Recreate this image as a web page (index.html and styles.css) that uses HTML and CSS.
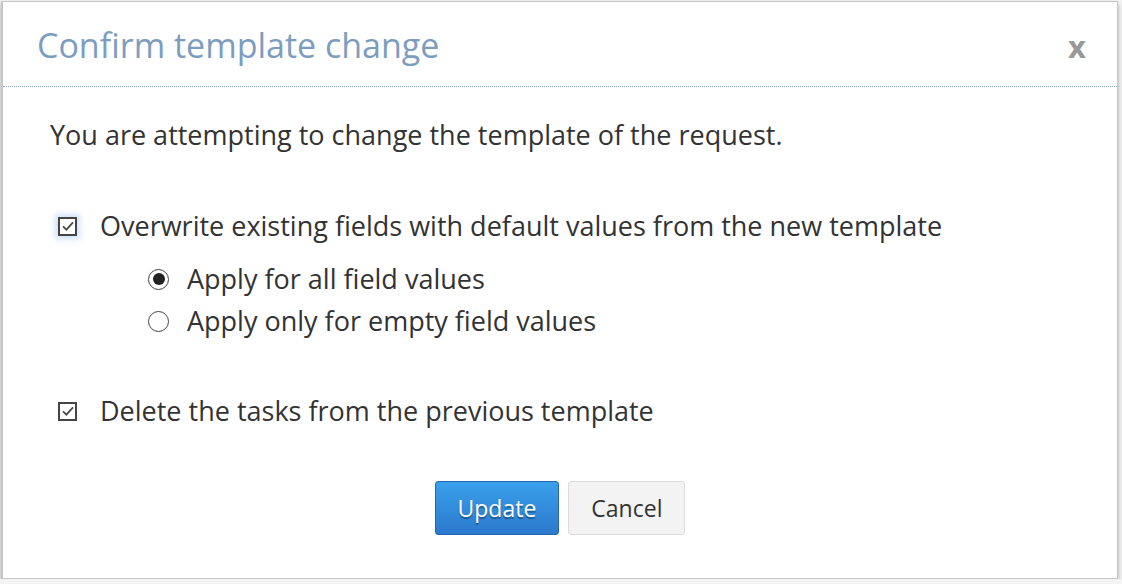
FILE: index.html
```html
<!DOCTYPE html>
<html lang="en">
  <head>
    <meta charset="UTF-8" />
    <meta name="viewport" content="width=device-width, initial-scale=1.0" />
    <title>Confirm template change</title>
    <link rel="stylesheet" href="styles.css">
  </head>
  <body>
    <div class="dialog">
      <div class="head">
        <h1 class="title">Confirm template change</h1>
        <span class="close">x</span>
      </div>
      <div class="body">
        <p class="intro">You are attempting to change the template of the request.</p>
        <label class="opt check focus">
          <span class="box"><svg viewBox="0 0 14 14" width="14" height="14"><path d="M2 7.4 L5.4 10.6 L12 3.4" fill="none" stroke="#4a4a4a" stroke-width="1.8"/></svg></span>
          Overwrite existing fields with default values from the new template
        </label>
        <div class="radios">
          <label class="opt"><span class="radio on"></span>Apply for all field values</label>
          <label class="opt"><span class="radio"></span>Apply only for empty field values</label>
        </div>
        <label class="opt check">
          <span class="box"><svg viewBox="0 0 14 14" width="14" height="14"><path d="M2 7.4 L5.4 10.6 L12 3.4" fill="none" stroke="#4a4a4a" stroke-width="1.8"/></svg></span>
          Delete the tasks from the previous template
        </label>
        <div class="actions">
          <button class="btn primary">Update</button>
          <button class="btn">Cancel</button>
        </div>
      </div>
    </div>
  </body>
</html>
```

FILE: styles.css
```css
* {
  margin: 0;
  padding: 0;
  box-sizing: border-box;
}
body {
  background: #f4f4f4;
  font-family: "Open Sans", "Noto Sans", sans-serif;
  color: #333;
}
.dialog {
  width: 1117px;
  height: 578px;
  margin: 1px 0 0 1px;
  background: #fff;
  border: 1px solid #c6c6c6;
  border-left-width: 2px;
  box-shadow: 0 3px 5px rgba(0, 0, 0, 0.3);
}
.head {
  display: flex;
  align-items: center;
  justify-content: space-between;
  height: 85px;
  padding: 0 31px 0 34px;
  border-bottom: 1px dotted #8fa9c9;
}
.title {
  font-weight: normal;
  font-size: 34px;
  color: #7d9dc0;
  padding-top: 2px;
}
.close {
  font-size: 31px;
  color: #999;
  font-weight: bold;
  padding-top: 4px;
}
.body {
  padding: 28px 0 0 47px;
}
.intro {
  font-size: 27px;
  line-height: 40px;
  margin-bottom: 50px;
}
.opt {
  display: flex;
  align-items: center;
  font-size: 27px;
  line-height: 42px;
}
.check .box {
  flex: none;
  width: 19px;
  height: 19px;
  border: 2px solid #444;
  margin: 0 23px 0 8px;
  display: flex;
  align-items: center;
  justify-content: center;
}
.check .box svg {
  flex: none;
}
.focus .box {
  box-shadow: 0 0 6px 3px rgba(120, 170, 240, 0.35);
}
.radios {
  padding-left: 98px;
  margin-top: 11px;
  margin-bottom: 48px;
}
.radio {
  flex: none;
  width: 21px;
  height: 21px;
  border: 1.5px solid #444;
  border-radius: 50%;
  margin-right: 18px;
  display: flex;
  align-items: center;
  justify-content: center;
}
.radio.on::after {
  content: "";
  width: 12px;
  height: 12px;
  border-radius: 50%;
  background: #222;
}
.actions {
  display: flex;
  justify-content: center;
  gap: 9px;
  padding-right: 47px;
  margin-top: 49px;
}
.btn {
  height: 54px;
  padding: 0 22px;
  font-family: "Open Sans", "Noto Sans", sans-serif;
  font-size: 23px;
  color: #333;
  background: #f3f3f3;
  border: 1px solid #dcdcdc;
  border-radius: 3px;
}
.btn.primary {
  background: linear-gradient(#3aa0ec, #2b79cc);
  border-color: #2766ad;
  color: #fff;
  text-shadow: 0 2px 1px rgba(0, 0, 0, 0.35);
}
```
